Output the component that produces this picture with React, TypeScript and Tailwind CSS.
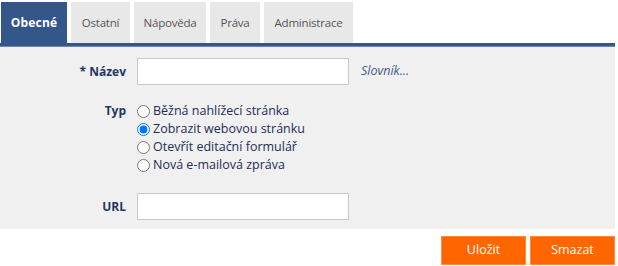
import React from 'react';

const tabs = [
  { label: 'Obecné', w: 'w-[66px]' },
  { label: 'Ostatní', w: 'w-[59px]' },
  { label: 'Nápověda', w: 'w-[72px]' },
  { label: 'Práva', w: 'w-[50px]' },
  { label: 'Administrace', w: 'w-[89px]' },
];

const types = [
  'Běžná nahlížecí stránka',
  'Zobrazit webovou stránku',
  'Otevřít editační formulář',
  'Nová e-mailová zpráva',
];

const App: React.FC = () => {
  return (
    <div className="w-[615px] bg-white text-[12px] font-['Open_Sans',sans-serif]">
      <div className="flex items-end gap-[4px] pl-[1px] pt-[2px]">
        {tabs.map((t, i) => (
          <div
            key={t.label}
            className={
              i === 0
                ? `${t.w} h-[41px] flex items-center justify-center bg-[#34568b] text-white font-bold tracking-[0.2px]`
                : `${t.w} h-[41px] flex items-center justify-center bg-[#e8e8e8] text-[#555] text-[11.5px] tracking-[-0.2px]`
            }
          >
            {t.label}
          </div>
        ))}
      </div>
      <div className="h-[4px] bg-[#34568b] border-b border-[#6f86ad]" />
      <div className="bg-[#f0f0f0] pt-[11px] pb-[9px] text-[#1f2e55]">
        <div className="flex items-center">
          <div className="w-[126px] text-right font-bold text-[#1f3864]">* Název</div>
          <input type="text" className="ml-[11px] w-[212px] h-[27px] bg-white border border-[#c8c8c8]" />
          <span className="ml-[12px] italic text-[#3d5a8c] text-[12.5px]">Slovník...</span>
        </div>
        <div className="flex mt-[17px]">
          <div className="w-[126px] text-right font-bold text-[#1f3864] leading-[18px]">Typ</div>
          <div className="ml-[11px] flex flex-col text-[12.5px]">
            {types.map((t, i) => (
              <label key={t} className="flex items-center h-[18px] leading-[18px]">
                <input type="radio" name="typ" defaultChecked={i === 1} className="m-0 w-[13px] h-[13px]" />
                <span className="ml-[3px]">{t}</span>
              </label>
            ))}
          </div>
        </div>
        <div className="flex items-center mt-[19px]">
          <div className="w-[126px] text-right font-bold text-[#1f3864]">URL</div>
          <input type="text" className="ml-[11px] w-[212px] h-[27px] bg-white border border-[#c8c8c8]" />
        </div>
      </div>
      <div className="flex justify-end gap-[4px] pt-[7px]">
        <button className="w-[85px] h-[29px] bg-[#ff6600] text-white text-[12.5px] border border-[#ff8a3d]">Uložit</button>
        <button className="w-[85px] h-[29px] bg-[#ff6600] text-white text-[12.5px] border border-[#ff8a3d]">Smazat</button>
      </div>
    </div>
  );
};

export default App;
